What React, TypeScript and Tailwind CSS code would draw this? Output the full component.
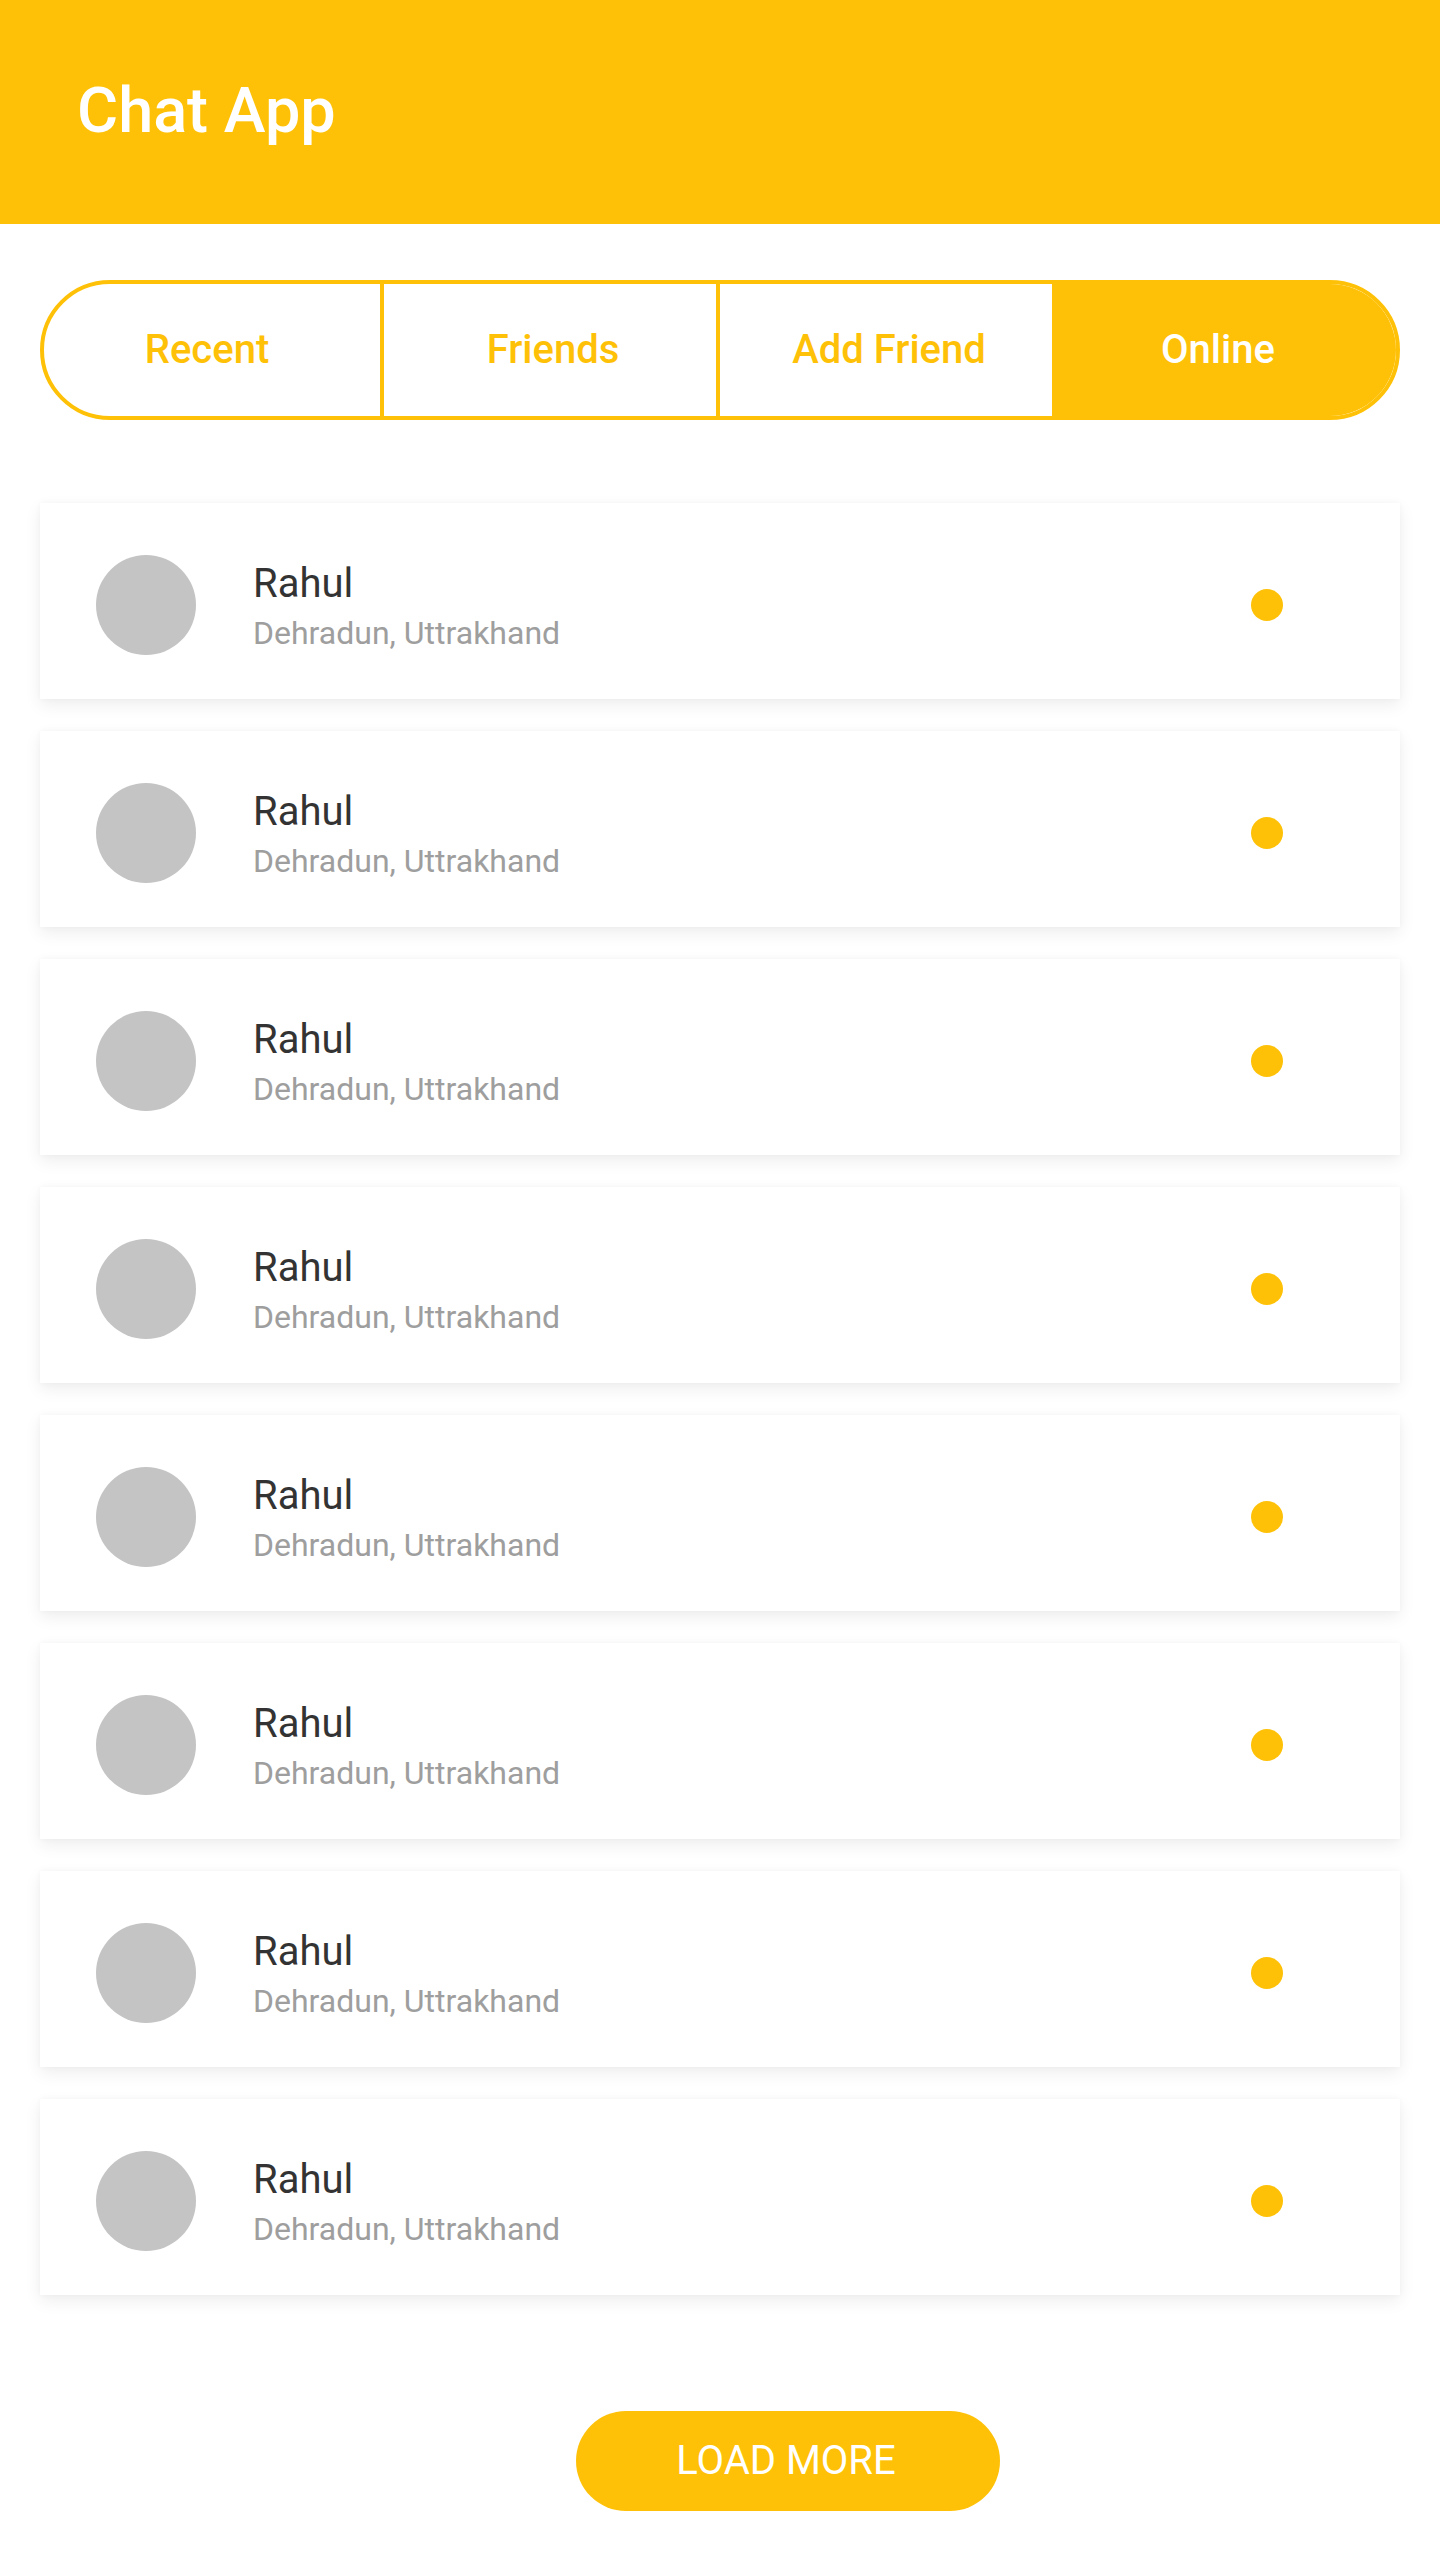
const TABS = [
	{ label: "Recent", active: false },
	{ label: "Friends", active: false },
	{ label: "Add Friend", active: false },
	{ label: "Online", active: true },
]

const USERS = Array.from({ length: 8 }, () => ({
	name: "Rahul",
	place: "Dehradun, Uttrakhand",
	online: true,
}))

function Header() {
	return (
		<header className="flex h-[224px] items-center bg-[#FFC107] pb-[4px] pl-[77px]">
			<h1 className="text-[63px] font-medium leading-none text-white">Chat App</h1>
		</header>
	)
}

function Tabs() {
	return (
		<div className="mx-[40px] mt-[56px] flex h-[140px] overflow-hidden rounded-full border-4 border-[#FFC107]">
			{TABS.map((tab, i) => (
				<div
					key={tab.label}
					className={
						tab.active
							? "flex flex-1 items-center justify-center bg-[#FFC107] pr-[12px] text-[40px] font-medium text-white"
							: i === 0
								? "flex w-[336px] items-center justify-center pr-[10px] text-[40px] font-medium text-[#FFC107]"
								: "flex w-[336px] items-center justify-center border-l-4 border-[#FFC107] pl-[6px] text-[40px] font-medium text-[#FFC107]"
					}
				>
					{tab.label}
				</div>
			))}
		</div>
	)
}

function UserCard({ name, place, online }: { name: string; place: string; online: boolean }) {
	return (
		<div className="flex h-[196px] items-center bg-white pl-[56px] pr-[117px] pt-[8px] shadow-[0_6px_16px_rgba(0,0,0,0.07),0_0_6px_rgba(0,0,0,0.03)]">
			<div className="size-[100px] shrink-0 rounded-full bg-[#C4C4C4]" />
			<div className="ml-[57px] flex flex-1 flex-col pt-[2px]">
				<span className="text-[40px] leading-[47px] text-[#333333]">{name}</span>
				<span className="mt-[7px] text-[32px] leading-[38px] text-[#9E9E9E]">{place}</span>
			</div>
			{online && <div className="size-[32px] rounded-full bg-[#FFC107]" />}
		</div>
	)
}

export default function App() {
	return (
		<div className="min-h-[2560px] bg-white pb-[48px] font-['Roboto',sans-serif]">
			<Header />
			<Tabs />
			<div className="mx-[40px] mt-[83px] flex flex-col gap-[32px]">
				{USERS.map((u, i) => (
					<UserCard key={i} {...u} />
				))}
			</div>
			<button className="ml-[576px] mt-[116px] flex h-[100px] w-[424px] items-center justify-center rounded-full bg-[#FFC107] pr-[4px] text-[40px] text-white">
				LOAD MORE
			</button>
		</div>
	)
}
